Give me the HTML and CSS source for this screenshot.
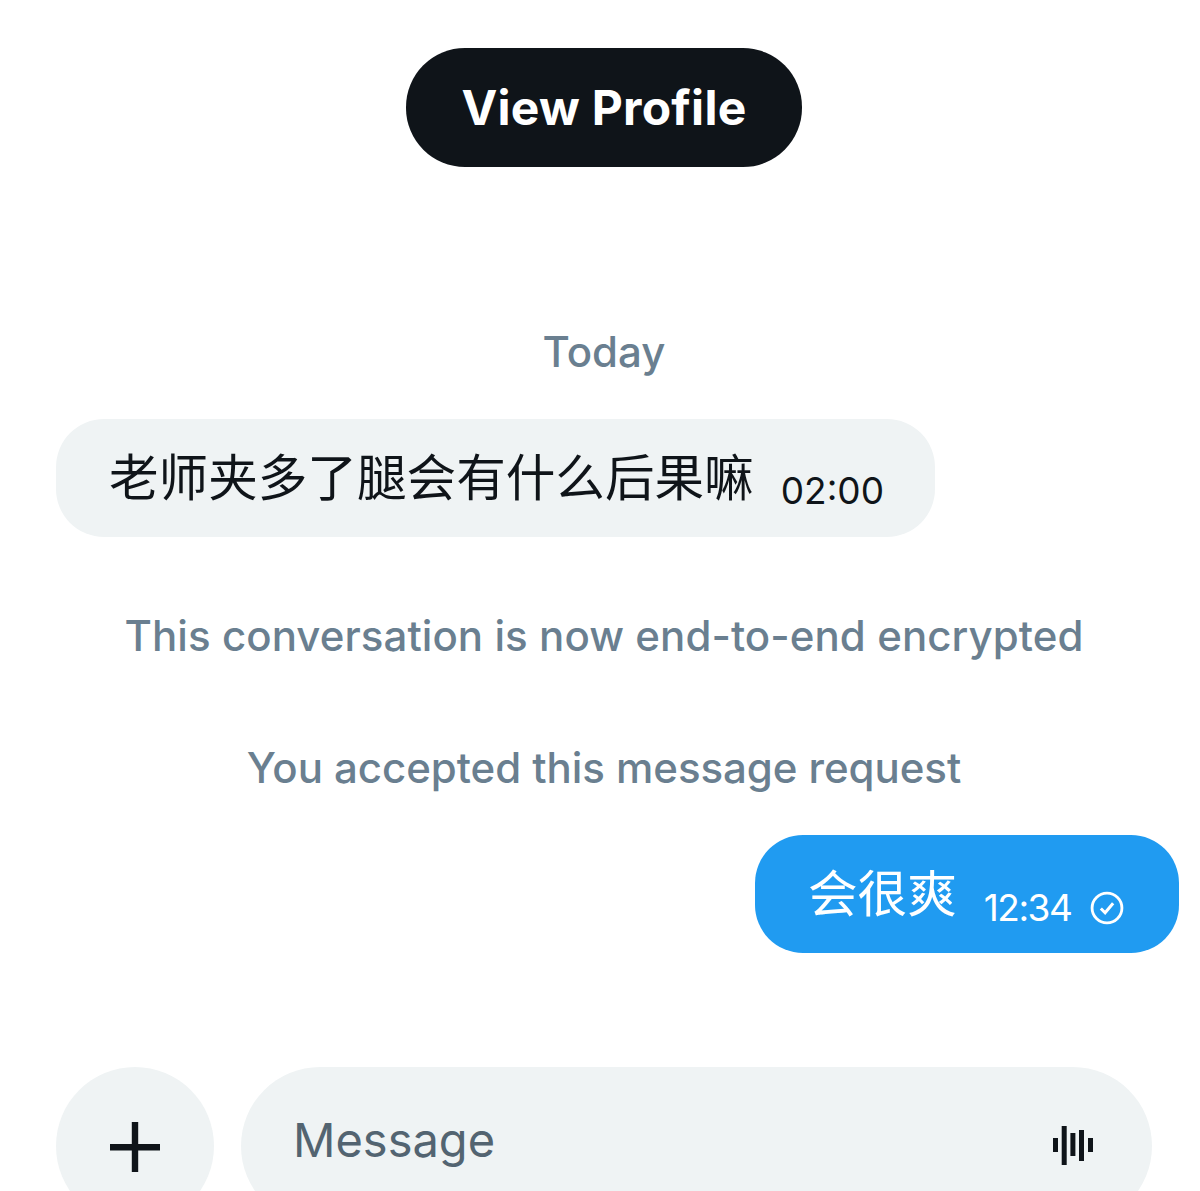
FILE: index.html
```html
<!DOCTYPE html>
<html lang="en">
<head>
    <meta charset="UTF-8">
    <meta name="viewport" content="width=device-width, initial-scale=1.0">
    <title>Messages</title>
    <link rel="stylesheet" href="styles.css">
</head>
<body>
    <div class="chat">
        <div class="profile-row">
            <button type="button" class="profile-btn">View Profile</button>
        </div>

        <p class="note note-today">Today</p>

        <div class="bubble bubble-in">
            <span class="bubble-text">老师夹多了腿会有什么后果嘛</span>
            <span class="bubble-time">02:00</span>
        </div>

        <p class="note note-encrypted">This conversation is now end-to-end encrypted</p>
        <p class="note note-accepted">You accepted this message request</p>

        <div class="bubble bubble-out">
            <span class="bubble-text">会很爽</span>
            <span class="bubble-time">12:34</span>
            <svg class="check" viewBox="0 0 36 36" fill="none" stroke="#fff">
                <circle cx="18" cy="18" r="15.8" stroke-width="3"/>
                <path d="M11.5 18.5l4.5 4.5 8.5-10" stroke-width="3.2"/>
            </svg>
        </div>

        <div class="composer">
            <button type="button" class="add-btn">
                <svg viewBox="0 0 50 50" class="plus"><path d="M0 22h50v6.4H0zM21.8 0h6.4v50h-6.4z"/></svg>
            </button>
            <div class="input">
                <span class="placeholder">Message</span>
                <svg viewBox="0 0 40 39" class="wave">
                    <rect x="0" y="12" width="5" height="14"/>
                    <rect x="8.7" y="0" width="5" height="39"/>
                    <rect x="17.4" y="7" width="5" height="23"/>
                    <rect x="26" y="4" width="5" height="31"/>
                    <rect x="35" y="12" width="5" height="14"/>
                </svg>
            </div>
        </div>
    </div>
</body>
</html>
```

FILE: styles.css
```css
html, body {
    margin: 0;
    height: 1191px;
    overflow: hidden;
    background-color: #fff;
}
body {
    font-family: Inter, "Noto Sans CJK SC", sans-serif;
    color: #0f1419;
}
.chat {
    display: flex;
    flex-direction: column;
    padding: 48px 21px 0 56px;
}
.profile-row {
    display: flex;
    justify-content: center;
    padding-right: 27px;
}
.profile-btn {
    width: 396px;
    height: 119px;
    border: none;
    border-radius: 59px;
    background-color: #0f1419;
    color: #fff;
    font-family: inherit;
    font-size: 48px;
    font-weight: 700;
    letter-spacing: 0.25px;
}
.note {
    margin: 0;
    margin-left: -56px;
    width: 1208px;
    text-align: center;
    color: #6a7f90;
    font-size: 42px;
    font-weight: 500;
    line-height: 52px;
}
.note-today {
    margin-top: 159px;
}
.note-encrypted {
    margin-top: 73px;
    letter-spacing: 0.07px;
}
.note-accepted {
    margin-top: 80px;
    letter-spacing: -0.05px;
}
.bubble {
    display: flex;
    align-items: center;
    height: 118px;
    box-sizing: border-box;
    border-radius: 48px;
}
.bubble-in {
    width: 879px;
    margin-top: 41px;
    padding-left: 53px;
    background-color: #eff3f4;
}
.bubble-out {
    align-self: flex-end;
    width: 424px;
    margin-top: 41px;
    padding-left: 53px;
    background-color: #209bf1;
    color: #fff;
}
.bubble-text {
    font-size: 49.6px;
    line-height: 60px;
    margin-top: -8px;
    font-family: "Noto Sans CJK SC", sans-serif;
}
.bubble-time {
    font-size: 37px;
    line-height: 44px;
    margin: 26px 0 0 27px;
}
.bubble-out .bubble-time {
    margin-top: 28px;
    letter-spacing: -1.5px;
}
.check {
    width: 34px;
    height: 34px;
    margin: 28px 0 0 19px;
}
.composer {
    display: flex;
    gap: 27px;
    margin-top: 114px;
    padding-right: 27px;
}
.add-btn {
    display: flex;
    align-items: center;
    justify-content: center;
    flex: none;
    width: 158px;
    height: 158px;
    padding: 0;
    border: none;
    border-radius: 50%;
    background-color: #eff3f4;
}
.plus {
    width: 50px;
    height: 50px;
    margin-top: 1px;
    fill: #0f1419;
}
.input {
    flex: 1;
    display: flex;
    align-items: center;
    justify-content: space-between;
    height: 158px;
    padding: 0 59px 0 52px;
    border-radius: 79px;
    background-color: #eff3f4;
}
.placeholder {
    color: #536471;
    font-size: 47px;
    margin-top: -14px;
}
.wave {
    width: 40px;
    height: 39px;
    margin-top: -1px;
    fill: #0f1419;
}
```
